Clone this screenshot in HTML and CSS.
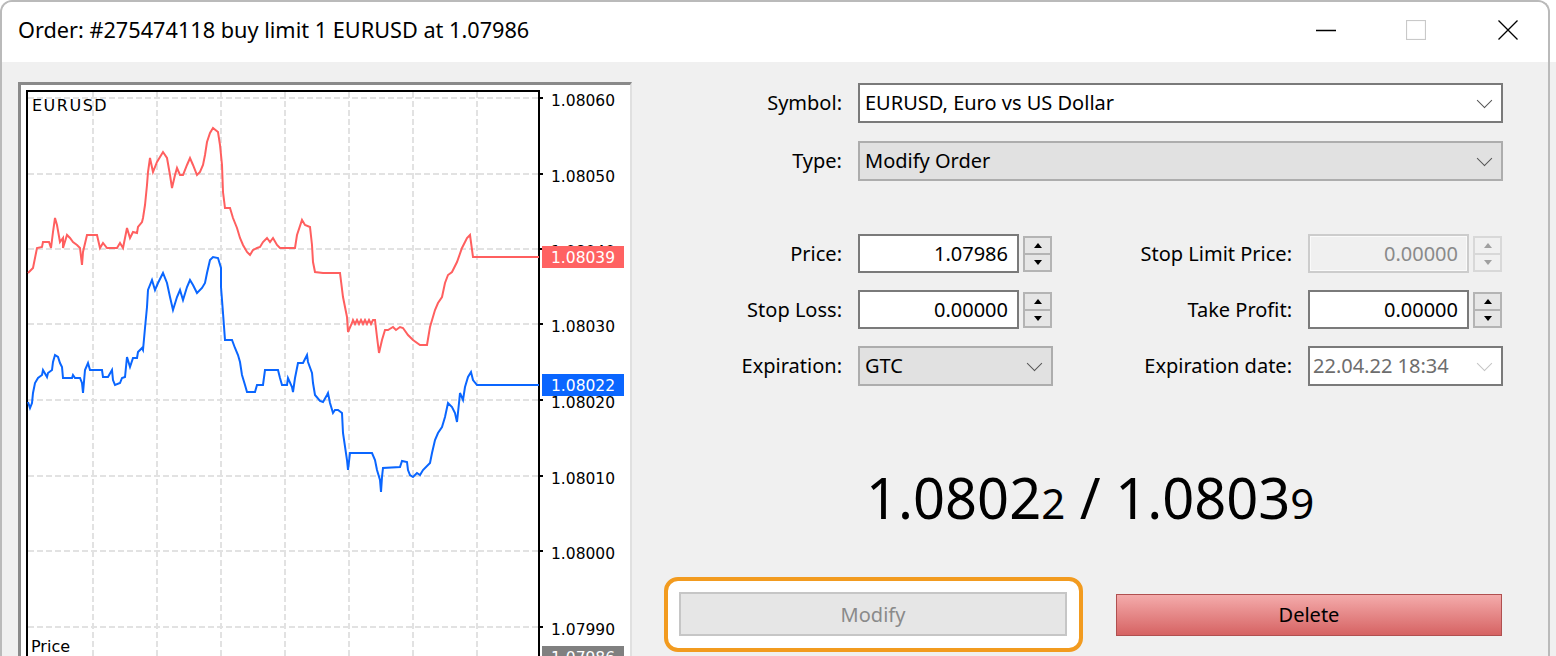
FILE: index.html
```html
<!DOCTYPE html>
<html>
<head>
<meta charset="utf-8">
<title>Order</title>
<link rel="stylesheet" href="styles.css">
</head>
<body>
<div class="window">
  <div class="titlebar">
    <div class="title">Order: #275474118 buy limit 1 EURUSD at 1.07986</div>
    <div class="controls">
      <div class="ctl ctl-min"><svg width="20" height="20" viewBox="0 0 20 20"><path d="M0 10.5H20" stroke="#000" stroke-width="1.4"/></svg></div>
      <div class="ctl ctl-max"><svg width="20" height="20" viewBox="0 0 20 20"><rect x="0.5" y="0.5" width="19" height="19" fill="none" stroke="#c9c9c9" stroke-width="1.2"/></svg></div>
      <div class="ctl ctl-close"><svg width="20" height="20" viewBox="0 0 20 20"><path d="M0.5 0.5L19.5 19.5M19.5 0.5L0.5 19.5" stroke="#000" stroke-width="1.3"/></svg></div>
    </div>
  </div>
  <div class="content">
    <div class="chart">
      <svg width="609" height="600" viewBox="21 85 609 600">
        <g stroke="#e2e2e2" stroke-width="2" stroke-dasharray="6 3" fill="none">
          <path d="M28 98H538M28 174H538M28 249H538M28 324H538M28 400H538M28 476H538M28 551H538M28 627H538"/>
          <path d="M93 92V700M157 92V700M221 92V700M285 92V700M349 92V700M413 92V700M477 92V700"/>
        </g>
        <path d="M27 90V700M26 91H540M539 90V700" stroke="#000" stroke-width="2" fill="none"/>
        <path d="M540 98h3M540 174h3M540 249h3M540 324h3M540 400h3M540 476h3M540 551h3M540 627h3" stroke="#000" stroke-width="2"/>
        <polyline class="ln-red" points="28,273 33,268 37,248 42,247 43,242 49,242 51,248 53,232 55,218 57,225 60,242 63,238 63,248 67,235 70,238 73,242 77,245 80,248 82,265 83,252 87,235 97,235 100,248 103,243 107,248 117,248 120,243 123,248 127,228 130,238 133,232 137,233 138,227 142,222 143,218 145,205 147,185 148,172 150,158 153,172 157,162 163,152 167,158 170,175 172,188 175,175 177,168 180,175 183,175 187,165 190,158 193,165 197,175 200,172 203,165 205,155 207,142 210,133 213,128 218,132 220,145 222,165 223,192 225,208 230,208 233,218 237,228 240,238 243,245 247,252 250,255 253,250 257,248 260,247 263,242 267,238 270,242 273,238 277,245 280,248 290,248 295,248 297,235 302,220 305,225 310,227 312,245 313,262 315,272 323,273 333,273 340,273 343,297 347,317 348,332 352,323 353,320 355,324 357,320 359,324 361,320 363,324 365,320 367,324 369,320 371,324 373,320 375,320 377,337 379,353 382,340 385,330 388,330 393,327 396,330 400,327 403,328 408,335 413,340 420,345 427,345 430,327 435,310 438,303 442,297 445,283 448,275 452,272 457,262 462,248 467,238 470,235 473,257 539,257"/>
        <polyline class="ln-blue" points="28,402 30,408 32,403 33,393 35,383 38,378 42,375 43,370 47,377 48,373 52,370 53,362 55,355 58,357 60,363 62,367 63,378 72,378 73,375 75,378 80,378 82,383 83,393 85,370 88,363 90,370 102,370 103,377 108,377 112,370 113,380 115,385 120,383 122,378 125,377 127,357 130,367 133,358 137,358 138,352 142,348 143,350 145,328 147,307 148,290 152,280 155,290 158,283 163,273 167,283 170,297 173,310 177,297 180,290 183,300 187,287 190,280 193,285 197,293 202,288 205,283 207,273 210,260 213,257 218,258 221,268 221,287 223,313 225,340 232,340 235,348 238,355 240,362 242,375 245,385 247,392 255,392 257,385 263,385 265,370 278,370 280,378 282,385 287,385 288,378 292,387 293,392 295,378 298,363 303,363 307,355 308,362 312,373 313,383 315,395 320,401 323,402 327,395 328,393 330,403 333,413 335,410 338,410 342,413 343,433 347,460 348,470 350,453 372,453 375,460 377,470 380,480 381,492 382,477 383,468 400,467 402,461 407,462 408,470 410,475 413,477 417,473 420,475 423,470 430,463 432,453 435,440 438,433 442,427 445,417 448,403 452,407 455,413 457,422 459,403 460,393 463,400 465,387 468,377 471,372 473,380 477,385 539,385"/>
        <g class="axis-txt">
          <text x="551" y="106">1.08060</text>
          <text x="551" y="182">1.08050</text>
          <text x="551" y="257">1.08040</text>
          <text x="551" y="332">1.08030</text>
          <text x="551" y="408">1.08020</text>
          <text x="551" y="484">1.08010</text>
          <text x="551" y="559">1.08000</text>
          <text x="551" y="635">1.07990</text>
        </g>
        <rect x="542" y="246" width="82" height="22" fill="#ff6262"/>
        <text class="axis-txt tag" x="551" y="263">1.08039</text>
        <rect x="542" y="374" width="82" height="22" fill="#0a66ff"/>
        <text class="axis-txt tag" x="551" y="391">1.08022</text>
        <rect x="542" y="646" width="82" height="22" fill="#808080"/>
        <text class="axis-txt tag" x="551" y="663">1.07986</text>
        <text class="chart-name" x="32" y="111">EURUSD</text>
        <text class="chart-sub" x="31" y="652">Price</text>
      </svg>
    </div>
    <div class="form">
      <div class="row">
        <div class="label">Symbol:</div>
        <div class="select wide"><span>EURUSD, Euro vs US Dollar</span><span class="chev"></span></div>
      </div>
      <div class="row">
        <div class="label">Type:</div>
        <div class="select wide flat"><span>Modify Order</span><span class="chev"></span></div>
      </div>
      <div class="grid">
        <div class="label">Price:</div>
        <div class="field"><div class="input">1.07986</div><div class="spin"><span><i class="up"></i></span><span><i class="dn"></i></span></div></div>
        <div class="label">Stop Limit Price:</div>
        <div class="field"><div class="input off">0.00000</div><div class="spin off"><span><i class="up"></i></span><span><i class="dn"></i></span></div></div>

        <div class="label">Stop Loss:</div>
        <div class="field"><div class="input">0.00000</div><div class="spin"><span><i class="up"></i></span><span><i class="dn"></i></span></div></div>
        <div class="label">Take Profit:</div>
        <div class="field"><div class="input">0.00000</div><div class="spin"><span><i class="up"></i></span><span><i class="dn"></i></span></div></div>

        <div class="label">Expiration:</div>
        <div class="select short flat"><span>GTC</span><span class="chev"></span></div>
        <div class="label">Expiration date:</div>
        <div class="select short date"><span>22.04.22 18:34</span><span class="chev light"></span></div>
      </div>
      <div class="quote">1.0802<small>2</small> / 1.0803<small>9</small></div>
      <div class="buttons">
        <div class="hl"><div class="btn btn-modify">Modify</div></div>
        <div class="btn btn-delete">Delete</div>
      </div>
    </div>
  </div>
</div>
</body>
</html>
```

FILE: styles.css
```css
* { box-sizing: border-box; }
html, body { margin: 0; padding: 0; }
body {
  width: 1556px;
  height: 656px;
  overflow: hidden;
  background: linear-gradient(#ffffff 0, #ffffff 62px, #f0f0f0 62px);
  font-family: "Noto Sans", "Open Sans", sans-serif;
  color: #000;
}
.window {
  width: 1550px;
  height: 656px;
  border: 2px solid #bababa;
  border-bottom: none;
  border-radius: 12px 12px 0 0;
  overflow: hidden;
  display: flex;
  flex-direction: column;
}
.titlebar {
  height: 60px;
  flex: none;
  background: #fff;
  display: flex;
  justify-content: space-between;
  align-items: flex-start;
}
.title {
  margin: 17px 0 0 16px;
  font-size: 21.7px;
  line-height: 22px;
  white-space: nowrap;
}
.controls { display: flex; margin-top: 18px; }
.ctl { display: flex; justify-content: center; height: 20px; }
.ctl svg { display: block; }
.ctl-min { width: 76px; }
.ctl-max { width: 104px; }
.ctl-close { width: 80px; }

.content {
  flex: 1;
  min-height: 0;
  background: #f0f0f0;
  display: flex;
  align-items: flex-start;
}

/* chart */
.chart {
  flex: none;
  margin: 20px 0 0 16px;
  width: 614px;
  height: 603px;
  border-top: 3px solid #8a8a8a;
  border-left: 3px solid #8a8a8a;
  border-right: 2px solid #e0e0e0;
  background: #fff;
}
.chart svg { display: block; }
.ln-red, .ln-blue { fill: none; stroke-width: 2; stroke-linejoin: miter; }
.ln-red { stroke: #ff5f5f; }
.ln-blue { stroke: #0a66ff; }
.axis-txt { font-family: "DejaVu Sans", sans-serif; font-size: 15.5px; fill: #000; }
.axis-txt.tag { fill: #fff; }
.chart-name { font-family: "DejaVu Sans", sans-serif; font-size: 16px; letter-spacing: 1.5px; fill: #000; }
.chart-sub { font-family: "DejaVu Sans", sans-serif; font-size: 16px; fill: #000; }

/* form */
.form {
  flex: none;
  margin: 21px 0 0 20px;
  width: 851px;
}
.row {
  display: flex;
  gap: 16px;
  height: 40px;
  align-items: center;
}
.row + .row { margin-top: 18px; }
.label {
  width: 190px;
  text-align: right;
  font-size: 20px;
  line-height: 40px;
  white-space: nowrap;
}
.grid .label { width: auto; }
.select {
  height: 40px;
  border: 2px solid #7a7a7a;
  background: #fff;
  display: flex;
  align-items: center;
  justify-content: space-between;
  padding: 0 9px 0 5px;
  font-size: 20px;
  line-height: 36px;
  white-space: nowrap;
}
.select.wide { width: 645px; }
.select.short { width: 195px; }
.select.flat { background: #e1e1e1; border-color: #adadad; }
.select.date { color: #6d6d6d; padding-left: 3px; }
.chev {
  width: 11px;
  height: 11px;
  border-right: 1.5px solid #555;
  border-bottom: 1.5px solid #555;
  transform: translate(-2px, -3px) rotate(45deg);
}
.chev.light { border-color: #c4c4c4; }

.grid {
  margin-top: 53px;
  display: grid;
  grid-template-columns: 190px 195px 223px 195px;
  grid-template-rows: 39px 39px 40px;
  column-gap: 16px;
  row-gap: 17px;
  align-items: center;
}
.field { display: flex; align-items: center; gap: 4px; height: 39px; }
.input {
  width: 161px;
  height: 39px;
  border: 2px solid #7a7a7a;
  background: #fff;
  text-align: right;
  padding-right: 9px;
  font-size: 20px;
  line-height: 35px;
}
.input.off { border-color: #cccccc; background: #f0f0f0; color: #8a8a8a; box-shadow: inset 0 0 0 1px #fafafa; }
.spin {
  width: 29px;
  height: 36px;
  display: flex;
  flex-direction: column;
  border: 2px solid #b4b4b4;
  background: #e6e6e6;
}
.spin span {
  flex: 1;
  display: flex;
  align-items: center;
  justify-content: center;
}
.spin span + span { border-top: 2px solid #b4b4b4; }
.spin .up, .spin .dn { width: 0; height: 0; border-left: 4px solid transparent; border-right: 4px solid transparent; }
.spin .up { border-bottom: 5px solid #000; }
.spin .dn { border-top: 5px solid #000; }
.spin.off { border-color: #d8d8d8; background: #f0f0f0; }
.spin.off span + span { border-top-color: #d8d8d8; }
.spin.off .up { border-bottom-color: #a0a0a0; }
.spin.off .dn { border-top-color: #a0a0a0; }

.quote {
  margin: 83px 0 0 214px;
  font-size: 56px;
  line-height: 56px;
  white-space: nowrap;
}
.quote small { font-size: 42px; }

.buttons {
  display: flex;
  align-items: center;
  margin: 46px 0 0 12px;
}
.hl {
  border: 4px solid #f29b1f;
  border-radius: 14px;
  padding: 11px 12px 12px 11px;
  background: #fff;
}
.btn {
  display: flex;
  align-items: center;
  justify-content: center;
  font-size: 20px;
}
.btn-modify {
  width: 388px;
  height: 44px;
  border: 2px solid #c6c6c6;
  background: #e6e6e6;
  color: #8a8a8a;
}
.btn-delete {
  margin-left: 33px;
  width: 386px;
  height: 42px;
  border: 1px solid #b05050;
  background: linear-gradient(#f4abab, #d66363);
  color: #000;
}
```
